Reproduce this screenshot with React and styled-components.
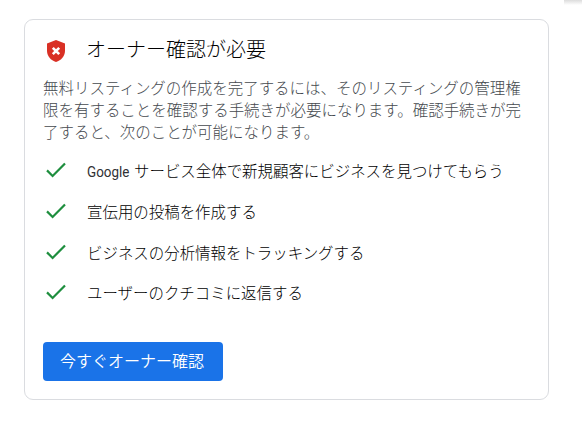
import React from 'react';
import styled, { createGlobalStyle } from 'styled-components';

const GlobalStyle = createGlobalStyle`
  * {
    box-sizing: border-box;
  }

  body {
    margin: 0;
    background: #fff;
    color: #000;
    font-family: Roboto, 'Noto Sans CJK JP', sans-serif;
  }
`;

const Page = styled.div`
  position: relative;
  height: 424px;
  padding: 19px 33px 24px 24px;
  overflow: hidden;
`;

// Bottom shadow of the panel above the page
const TopShadow = styled.div`
  position: absolute;
  top: 0;
  right: 0;
  width: 18px;
  height: 5px;
  background: linear-gradient(#dcdcdc, #fff);
`;

const Card = styled.section`
  height: 381px;
  padding: 17px 18px 0;
  border: 1px solid #dadce0;
  border-radius: 9px;
`;

const Header = styled.div`
  display: flex;
  align-items: center;
  height: 26px;
`;

const IconSlot = styled.span`
  display: flex;
  flex: none;
  width: ${(props) => props.$width || 44}px;
  padding-top: ${(props) => props.$drop || 0}px;
  padding-left: ${(props) => props.$inset || 0}px;
`;

const Title = styled.h2`
  margin: 0;
  font-size: 20px;
  font-weight: 300;
  line-height: 26px;
  white-space: nowrap;
`;

const Description = styled.p`
  margin: 15px 0 0;
  color: #45494e;
  font-size: 15.47px;
  font-weight: 300;
  line-height: 22px;
  white-space: nowrap;
`;

const BenefitList = styled.ul`
  display: grid;
  grid-template-rows: 41px 41px 41px 39px;
  margin: 5px 0 0;
  padding: 0;
  list-style: none;
`;

const Benefit = styled.li`
  display: flex;
  align-items: center;
  font-size: 15.45px;
  font-weight: 300;
  white-space: nowrap;
`;

const Brand = styled.span`
  display: inline-block;
  width: 43px;
  margin-right: 4px;
  color: #303134;
  font-weight: 400;
  transform: scaleX(0.87);
  transform-origin: left;
`;

const VerifyButton = styled.button`
  display: block;
  width: 180px;
  height: 39px;
  margin-top: 31px;
  padding: 0 2px 0 0;
  border: 0;
  border-radius: 4px;
  background: #1a73e8;
  color: #fff;
  font-family: inherit;
  font-size: 16px;
  font-weight: 350;
  line-height: 38px;
`;

const benefits = [
  <><Brand>Google</Brand>サービス全体で新規顧客にビジネスを見つけてもらう</>,
  '宣伝用の投稿を作成する',
  'ビジネスの分析情報をトラッキングする',
  'ユーザーのクチコミに返信する',
];

function ShieldIcon() {
  return (
    <svg width="18" height="22" viewBox="0 0 18 22">
      <path fill="#d93025" d="M9 0L0 3.4v7.4C0 16.2 3.8 20.6 9 22c5.2-1.4 9-5.8 9-11.2V3.4z" />
      <path stroke="#fff" strokeWidth="2.6" d="M5.8 7.8l6.4 6.4M12.2 7.8l-6.4 6.4" />
    </svg>
  );
}

function CheckIcon() {
  return (
    <svg width="20" height="16" viewBox="0 0 20 16">
      <path fill="none" stroke="#1e8e3e" strokeWidth="2.2" d="M1 8.4l5.6 5.6L19 1.4" />
    </svg>
  );
}

function App() {
  return (
    <>
      <GlobalStyle />
      <Page>
        <TopShadow />
        <Card>
          <Header>
            <IconSlot $inset={4} $drop={2} $width={43}><ShieldIcon /></IconSlot>
            <Title>オーナー確認が必要</Title>
          </Header>
          <Description>
            無料リスティングの作成を完了するには、そのリスティングの管理権<br />
            限を有することを確認する手続きが必要になります。確認手続きが完<br />
            了すると、次のことが可能になります。
          </Description>
          <BenefitList>
            {benefits.map((benefit, index) => (
              <Benefit key={index}>
                <IconSlot $inset={3}><CheckIcon /></IconSlot>
                <span>{benefit}</span>
              </Benefit>
            ))}
          </BenefitList>
          <VerifyButton>今すぐオーナー確認</VerifyButton>
        </Card>
      </Page>
    </>
  );
}

export default App;
